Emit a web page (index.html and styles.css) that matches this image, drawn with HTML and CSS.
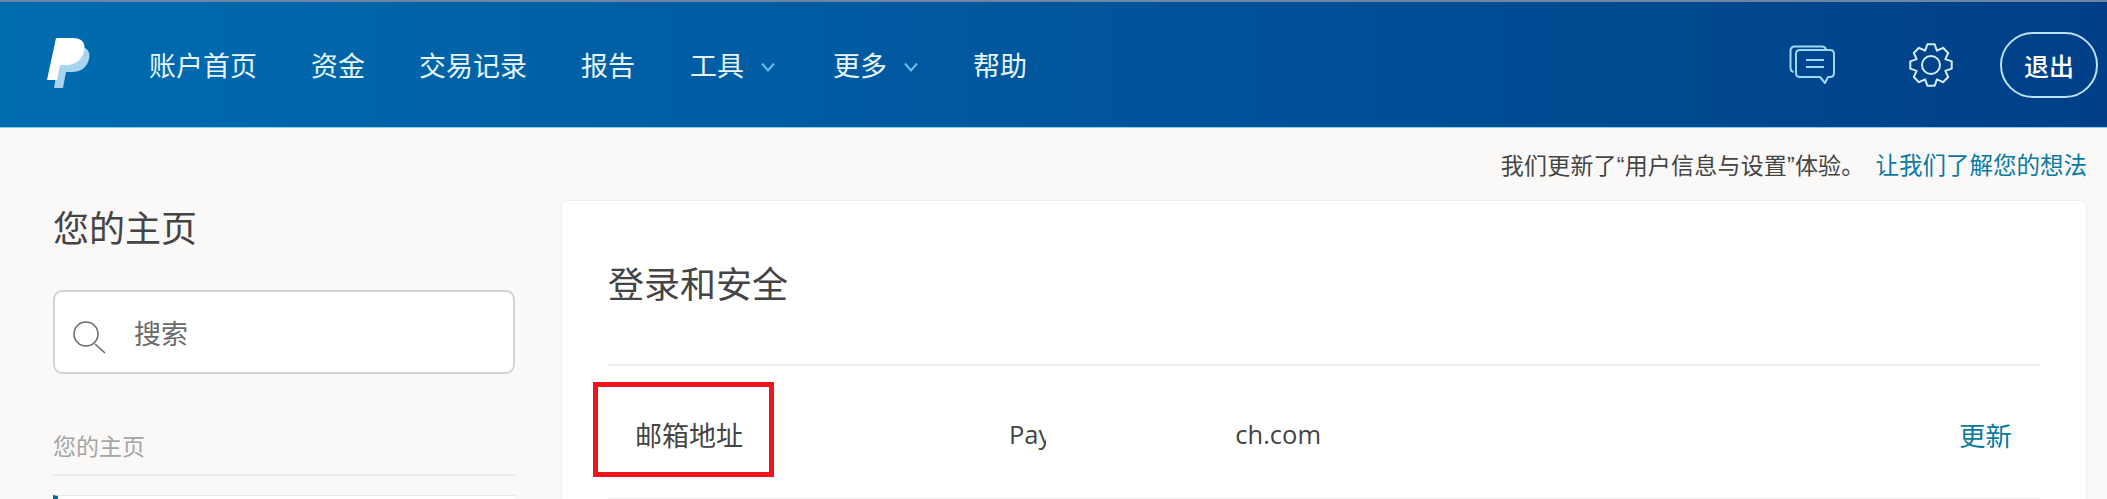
FILE: index.html
```html
<!DOCTYPE html>
<html lang="zh-CN">
<head>
    <title>登录和安全</title>
    <meta charset="utf-8">
    <link rel="stylesheet" href="styles.css">
</head>
<body>
    <div class="topbar">
        <svg class="logo" width="44" height="50" viewBox="0 0 44 50">
            <path class="logo-back" d="M14 8h16c9 0 14 5 12 13-2 9-9 13-17 13h-6l-3 16H7z"/>
            <path class="logo-front" d="M9 0h17c9 0 13 5 11 13-2 9-9 14-17 14h-7l-3 15H0z"/>
        </svg>
        <nav class="nav">
            <a class="nav-item">账户首页</a>
            <a class="nav-item">资金</a>
            <a class="nav-item">交易记录</a>
            <a class="nav-item">报告</a>
            <a class="nav-item nav-tools">工具
                <svg class="chevron" width="16" height="10" viewBox="0 0 16 10"><path d="M2 1.5l6 7 6-7"/></svg>
            </a>
            <a class="nav-item">更多
                <svg class="chevron" width="16" height="10" viewBox="0 0 16 10"><path d="M2 1.5l6 7 6-7"/></svg>
            </a>
            <a class="nav-item">帮助</a>
        </nav>
        <div class="top-actions">
            <svg class="top-icon" width="46" height="40" viewBox="0 0 46 40">
                <path d="M37 4.500C36.500 2.500 35 1.500 33 1.500H6C3 1.500 1.500 3 1.500 6v17c0 2 1 3.500 3 4"/>
                <path d="M11 5h30c2.500 0 4 1.500 4 4v19c0 2.500-1.500 4-4 4h-2l-3 6-5-6H11c-2.500 0-4-1.500-4-4V9c0-2.500 1.500-4 4-4z"/>
                <path d="M17 15h18M17 22h18"/>
            </svg>
            <svg class="top-icon gear" width="46" height="46" viewBox="0 0 46 46">
                <polygon points="19.35,2.3 26.65,2.3 28.93,8.68 35.05,5.8 40.2,10.95 37.32,17.07 43.7,19.35 43.7,26.65 37.32,28.93 40.2,35.05 35.05,40.2 28.93,37.32 26.65,43.7 19.35,43.7 17.07,37.32 10.95,40.2 5.8,35.05 8.68,28.93 2.3,26.65 2.3,19.35 8.68,17.07 5.8,10.95 10.95,5.8 17.07,8.68"/>
                <circle cx="23" cy="23" r="9"/>
            </svg>
            <a class="logout">退出</a>
        </div>
    </div>

    <div class="notice">
        <span class="notice-text">我们更新了“用户信息与设置”体验。</span>
        <a class="link notice-link">让我们了解您的想法</a>
    </div>

    <div class="main">
        <div class="sidebar">
            <h2 class="side-title">您的主页</h2>
            <div class="search">
                <svg class="search-icon" width="34" height="34" viewBox="0 0 34 34">
                    <circle cx="14" cy="14" r="12"/>
                    <path d="M23 24l10 9"/>
                </svg>
                <span>搜索</span>
            </div>
            <div class="side-label">您的主页</div>
            <div class="side-item"></div>
        </div>

        <div class="card">
            <h2 class="card-title">登录和安全</h2>
            <div class="row">
                <div class="row-label">邮箱地址</div>
                <div class="row-value">Pay<span class="redacted"></span>ch.com</div>
                <a class="link row-action">更新</a>
                <div class="highlight"></div>
            </div>
        </div>
    </div>
</body>
</html>
```

FILE: styles.css
```css
body {
    margin: 0;
    height: 499px;
    overflow: hidden;
    background-color: #faf9f8;
    font-family: "Liberation Sans", "Noto Sans CJK SC", sans-serif;
    color: #444;
}

h2 {
    margin: 0;
    font-weight: 400;
}

.topbar {
    display: flex;
    align-items: center;
    height: 125px;
    padding: 0 9px 0 47px;
    border-top: 2px solid #6d86a6;
    border-bottom: 1px solid #7fd3ee;
    background: linear-gradient(90deg, #006cb0 0%, #00589f 45%, #003f87 100%);
}

.logo {
    margin-top: -3px;
}

.logo-front {
    fill: #fff;
}

.logo-back {
    fill: #a8d4ef;
}

.nav {
    display: flex;
    align-items: center;
    gap: 54px;
    margin-left: 58px;
}

.nav-item {
    display: flex;
    align-items: center;
    gap: 16px;
    font-size: 27px;
    color: #e6f6fb;
    white-space: nowrap;
}

.nav-tools {
    margin-left: 1px;
    margin-right: 3px;
}

.chevron {
    margin-top: 5px;
    fill: none;
    stroke: #5fc3e8;
    stroke-width: 2;
}

.top-actions {
    display: flex;
    align-items: center;
    margin-left: auto;
}

.top-icon {
    fill: none;
    stroke: #9fd8f2;
    stroke-width: 2;
    stroke-linejoin: round;
}

.gear {
    margin-left: 73px;
    margin-right: 46px;
    stroke: #d5eef8;
}

.logout {
    display: flex;
    align-items: center;
    justify-content: center;
    width: 94px;
    height: 62px;
    border: 2px solid #b9e2f3;
    border-radius: 33px;
    font-size: 25px;
    font-weight: 500;
    color: #fff;
}

.notice {
    display: flex;
    align-items: center;
    justify-content: flex-end;
    height: 72px;
    padding-right: 20px;
    font-size: 23px;
}

.notice-text {
    letter-spacing: 0.2px;
}

.notice-link {
    margin-left: 11px;
    font-size: 23.5px;
}

.link {
    color: #0a7aa0;
}

.main {
    display: flex;
    align-items: flex-start;
}

.sidebar {
    width: 462px;
    margin-left: 53px;
}

.side-title {
    margin-top: 8px;
    font-size: 36px;
    line-height: 44px;
}

.search {
    display: flex;
    align-items: center;
    gap: 28px;
    box-sizing: border-box;
    height: 84px;
    margin-top: 38px;
    padding-left: 17px;
    border: 2px solid #d5d3d0;
    border-radius: 9px;
    background-color: #fff;
    font-size: 27px;
    color: #6b6b6b;
}

.search-icon {
    margin-top: 10px;
    fill: none;
    stroke: #666;
    stroke-width: 1.5;
}

.side-label {
    margin-top: 60px;
    padding-bottom: 13px;
    border-bottom: 2px solid #ececea;
    font-size: 23px;
    line-height: 27px;
    color: #a5a5a3;
}

.side-item {
    height: 4px;
    margin-top: 19px;
    border-top: 1px solid #e8e8e6;
    border-left: 5px solid #0a6a90;
    background-color: #fff;
}

.card {
    box-sizing: border-box;
    width: 1526px;
    height: 299px;
    margin-left: 46px;
    padding: 0 46px;
    border: 1px solid #efefed;
    border-bottom: 0;
    border-radius: 6px 6px 0 0;
    background-color: #fff;
}

.card-title {
    padding: 65px 0 58px;
    border-bottom: 2px solid #ececea;
    font-size: 36px;
    line-height: 40px;
}

.row {
    position: relative;
    display: flex;
    align-items: center;
    box-sizing: border-box;
    height: 133px;
    padding: 4px 28px 0 27px;
    border-bottom: 1px solid #f0f0ee;
    font-size: 27px;
}

.row-label {
    width: 374px;
    font-size: 27px;
}

.row-value {
    display: flex;
    align-items: center;
    font-family: "Open Sans", sans-serif;
    font-size: 25.5px;
    color: #444;
}

.redacted {
    width: 189px;
    height: 60px;
    margin-left: -5px;
    background-color: #fff;
}

.row-action {
    margin-left: auto;
    font-size: 26.5px;
}

.highlight {
    position: absolute;
    left: -15px;
    top: 16px;
    box-sizing: border-box;
    width: 181px;
    height: 95px;
    border: 5px solid #f0141e;
}
```
